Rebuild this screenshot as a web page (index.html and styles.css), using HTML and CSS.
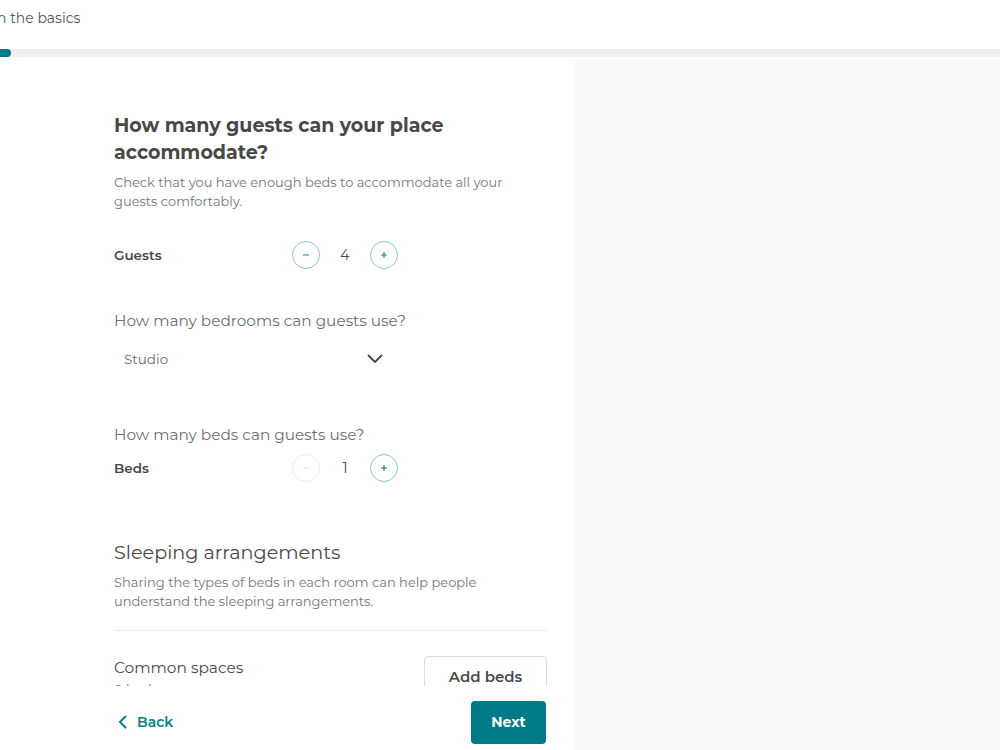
FILE: index.html
```html
<!DOCTYPE html>
<html>
<head>
<meta charset="utf-8">
<link rel="stylesheet" href="styles.css">
</head>
<body>
<header class="topbar">
  <div class="step-title">n the basics</div>
</header>
<div class="progress"><div class="progress-fill"></div></div>
<div class="main">
  <section class="panel">
    <div class="scroll">
      <div class="content">
        <h1 class="title">How many guests can your place accommodate?</h1>
        <p class="subtitle">Check that you have enough beds to accommodate all your guests comfortably.</p>
        <div class="row row-guests">
          <span class="row-label">Guests</span>
          <div class="stepper">
            <button class="step-btn"><svg width="12" height="12" viewBox="0 0 12 12"><path d="M3.5 6h5" stroke="#008489" stroke-width="1.2" stroke-linecap="round"/></svg></button>
            <span class="step-val">4</span>
            <button class="step-btn"><svg width="12" height="12" viewBox="0 0 12 12"><path d="M3.5 6h5M6 3.5v5" stroke="#008489" stroke-width="1.2" stroke-linecap="round"/></svg></button>
          </div>
        </div>
        <h2 class="question q-bedrooms">How many bedrooms can guests use?</h2>
        <div class="select">
          <span>Studio</span>
          <svg width="16" height="10" viewBox="0 0 16 10"><path d="M1.5 1.5l6.5 6.5 6.5-6.5" fill="none" stroke="#484848" stroke-width="1.8" stroke-linecap="round" stroke-linejoin="round"/></svg>
        </div>
        <h2 class="question q-beds">How many beds can guests use?</h2>
        <div class="row row-beds">
          <span class="row-label">Beds</span>
          <div class="stepper">
            <button class="step-btn disabled"><svg width="12" height="12" viewBox="0 0 12 12"><path d="M3.5 6h5" stroke="#dcdcdc" stroke-width="1.2" stroke-linecap="round"/></svg></button>
            <span class="step-val">1</span>
            <button class="step-btn"><svg width="12" height="12" viewBox="0 0 12 12"><path d="M3.5 6h5M6 3.5v5" stroke="#008489" stroke-width="1.2" stroke-linecap="round"/></svg></button>
          </div>
        </div>
        <h2 class="section-title">Sleeping arrangements</h2>
        <p class="subtitle sleep-desc">Sharing the types of beds in each room can help people understand the sleeping arrangements.</p>
        <hr class="divider">
        <div class="space-row">
          <div class="space-info">
            <div class="space-name">Common spaces</div>
            <div class="space-count">0 beds</div>
          </div>
          <button class="add-beds">Add beds</button>
        </div>
      </div>
    </div>
    <footer class="footer">
      <a class="back">
        <svg width="10" height="14" viewBox="0 0 10 14"><path d="M7.5 1.5L2 7l5.5 5.5" fill="none" stroke="#008489" stroke-width="2" stroke-linecap="round" stroke-linejoin="round"/></svg>
        <span>Back</span>
      </a>
      <button class="next">Next</button>
    </footer>
  </section>
  <aside class="side"></aside>
</div>
</body>
</html>
```

FILE: styles.css
```css
* { box-sizing: border-box; }
html, body { margin: 0; padding: 0; }
body {
  width: 1000px;
  height: 750px;
  overflow: hidden;
  background: #fff;
  font-family: "Montserrat", "Inter", "Noto Sans", sans-serif;
  color: #484848;
}
.topbar {
  height: 49px;
  display: flex;
  align-items: flex-start;
  background: #fff;
}
.step-title {
  margin-left: -3px;
  margin-top: 9px;
  font-size: 14px;
  line-height: 18px;
  color: #555;
}
.progress {
  height: 8px;
  background: linear-gradient(#ececec, #f2f2f2);
}
.progress-fill {
  width: 11px;
  height: 8px;
  background: #007a87;
  border-radius: 0 4px 4px 0;
}
.main {
  display: flex;
  height: 693px;
}
.panel {
  width: 575px;
  display: flex;
  flex-direction: column;
  background: #fff;
}
.side {
  flex: 1;
  background: #f9f9f9;
  margin-top: 2px;
}
.scroll {
  flex: 1;
  overflow: hidden;
}
.content {
  padding: 55px 28px 0 114px;
}
.title {
  margin: 0;
  font-size: 19px;
  font-weight: 700;
  line-height: 27px;
  color: #484848;
  width: 400px;
}
.subtitle {
  margin: 7px 0 0;
  font-size: 13px;
  line-height: 19px;
  color: #767676;
  width: 420px;
}
.row {
  display: flex;
  align-items: center;
  justify-content: space-between;
  width: 284px;
}
.row-guests { margin-top: 30px; }
.row-label {
  font-size: 13.5px;
  font-weight: 600;
  color: #484848;
}
.stepper {
  display: flex;
  align-items: center;
}
.step-btn {
  width: 28px;
  height: 28px;
  border-radius: 50%;
  border: 1px solid #8cc6c8;
  background: #fff;
  padding: 0;
  display: flex;
  align-items: center;
  justify-content: center;
}
.step-btn.disabled { border-color: #ececec; }
.step-val {
  width: 50px;
  text-align: center;
  font-size: 14px;
  color: #484848;
}
.question {
  margin: 0;
  font-size: 15.3px;
  font-weight: 400;
  line-height: 22px;
  color: #6f6f6f;
}
.q-bedrooms { margin-top: 41px; }
.select {
  margin-top: 16px;
  width: 284px;
  display: flex;
  align-items: center;
  justify-content: space-between;
  padding: 0 15px 0 10px;
  font-size: 13.5px;
  color: #6a6a6a;
  height: 22px;
}
.q-beds { margin-top: 54px; }
.row-beds { margin-top: 8px; }
.section-title {
  margin: 57px 0 0;
  font-size: 19.2px;
  font-weight: 400;
  line-height: 26px;
  color: #484848;
}
.subtitle.sleep-desc { margin-top: 8px; width: 380px; }
.divider {
  margin: 19px 0 0;
  border: 0;
  border-top: 1px solid #ebebeb;
  width: 433px;
}
.space-row {
  margin-top: 26px;
  display: flex;
  justify-content: space-between;
  align-items: flex-start;
  width: 433px;
}
.space-name {
  font-size: 15.4px;
  line-height: 22px;
  color: #484848;
}
.space-count {
  font-size: 13px;
  color: #767676;
  line-height: 20px;
}
.add-beds {
  width: 123px;
  height: 46px;
  border: 1px solid #dcdcdc;
  border-radius: 4px;
  background: #fff;
  font-family: inherit;
  font-size: 15px;
  font-weight: 600;
  color: #484848;
  margin-top: -1px;
  padding: 0 0 6px;
}
.footer {
  height: 64px;
  background: #fff;
  display: flex;
  align-items: center;
  justify-content: space-between;
  padding: 0 29px 0 118px;
}
.back {
  display: flex;
  align-items: center;
  gap: 9px;
  color: #008489;
  font-size: 14px;
  font-weight: 600;
  margin-top: 8px;
}
.next {
  width: 75px;
  height: 43px;
  border: 0;
  border-radius: 4px;
  background: #007a87;
  color: #fff;
  font-family: inherit;
  font-size: 14px;
  font-weight: 700;
  margin-top: 8px;
}
```
